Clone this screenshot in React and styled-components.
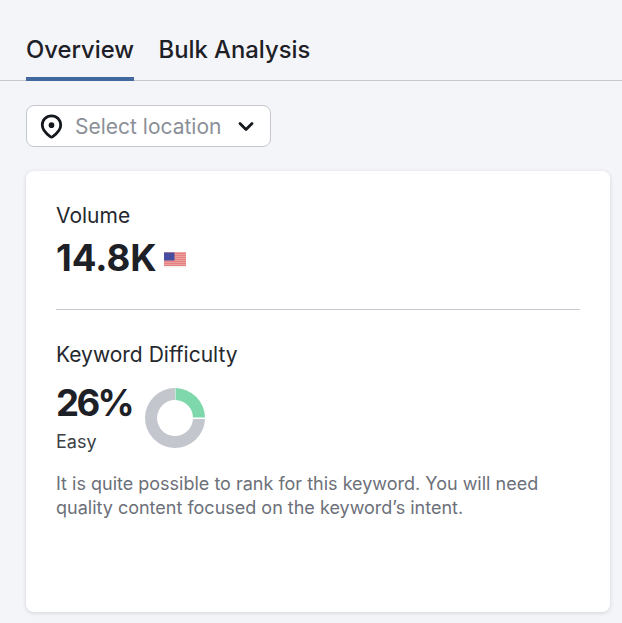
import React from 'react';
import styled, { createGlobalStyle } from 'styled-components';

const GlobalStyle = createGlobalStyle`
	html, body {
		margin: 0;
		padding: 0;
		background: #f4f5f9;
	}
	body {
		font-family: Inter, "Liberation Sans", sans-serif;
		color: #1d2026;
	}
`;

const PinIcon = () => (
	<svg width="27" height="27" viewBox="0 0 24 24" fill="none">
		<path
			d="M12 2.6c-4.6 0-8.2 3.6-8.2 8.1 0 3.3 2.5 6.900 7.100 10.300.66.48 1.540.48 2.200 0 4.600-3.400 7.100-7 7.100-10.300 0-4.500-3.600-8.100-8.200-8.100z"
			stroke="#14171c"
			strokeWidth="2.500"
		/>
		<circle cx="12" cy="10.800" r="2.500" fill="#14171c" />
	</svg>
);

const ChevronIcon = () => (
	<svg width="16" height="16" viewBox="0 0 16 16" fill="none">
		<path d="M2 5.500 8 11.500l6-6" stroke="#14171c" strokeWidth="2.800" strokeLinecap="round" strokeLinejoin="round" />
	</svg>
);

const stripes = [0, 2, 4, 6, 8, 10, 12];

const FlagIcon = () => (
	<svg width="22" height="16" viewBox="0 0 22 16">
		<rect width="22" height="15" y="0.500" fill="#f4f1f3" />
		{stripes.map((y) => (
			<rect key={y} x="0" y={y + 0.500} width="22" height="1.200" fill="#e2504f" />
		))}
		<rect x="0" y="0.500" width="10.500" height="8" fill="#474c9e" />
	</svg>
);

const Donut = () => (
	<svg width="62" height="62" viewBox="0 0 62 62">
		<path d="M61 32A30 30 0 1 1 31 1V13A18 18 0 1 0 49 32z" fill="#c3c6cd" />
		<path d="M31.500 1a30 30 0 0 1 29.500 29.500H49A18 18 0 0 0 31.500 13z" fill="#7ed8ac" />
	</svg>
);

const App = () => {
	return (
		<Page>
			<GlobalStyle />
			<Tabs>
				<Tab $active>Overview</Tab>
				<Tab>Bulk Analysis</Tab>
			</Tabs>
			<Content>
				<LocationSelect>
					<PinIcon />
					<Placeholder>Select location</Placeholder>
					<ChevronIcon />
				</LocationSelect>
				<Card>
					<Section>
						<Label>Volume</Label>
						<VolumeRow>
							<BigValue>14.8K</BigValue>
							<FlagWrap>
								<FlagIcon />
							</FlagWrap>
						</VolumeRow>
					</Section>
					<Divider />
					<Section>
						<Label>Keyword Difficulty</Label>
						<DifficultyRow>
							<div>
								<BigValue $tight>26%</BigValue>
								<Level>Easy</Level>
							</div>
							<DonutWrap>
								<Donut />
							</DonutWrap>
						</DifficultyRow>
						<Description>
							It is quite possible to rank for this keyword. You will need quality content focused on the keyword’s intent.
						</Description>
					</Section>
				</Card>
			</Content>
		</Page>
	);
};

export default App;

const Page = styled.div`
	width: 622px;
	height: 623px;
	overflow: hidden;
	background: #f4f5f9;
`;

const Tabs = styled.div`
	display: flex;
	column-gap: 24.5px;
	height: 81px;
	padding: 0 26px;
	box-sizing: border-box;
	border-bottom: 1px solid #c5c8ce;
`;

const Tab = styled.div`
	height: 81px;
	box-sizing: border-box;
	padding-top: 34px;
	font-size: 23.8px;
	line-height: 32px;
	font-weight: 500;
	border-bottom: ${(props) => (props.$active ? '4px solid #42699f' : 'none')};
`;

const Content = styled.div`
	padding: 24px 12px 0 26px;
`;

const LocationSelect = styled.div`
	display: flex;
	align-items: center;
	width: 245px;
	height: 42px;
	box-sizing: border-box;
	padding: 0 16px 0 11px;
	background: #fff;
	border: 1px solid #c5c8ce;
	border-radius: 8px;
`;

const Placeholder = styled.span`
	flex: 1;
	margin-left: 10px;
	font-size: 21px;
	color: #8b8f97;
`;

const Card = styled.div`
	height: 441px;
	box-sizing: border-box;
	margin-top: 24px;
	padding: 32px 30px 0;
	background: #fff;
	border-radius: 8px;
	box-shadow: 0 1px 4px rgba(60, 65, 80, 0.18);
`;

const Section = styled.div``;

const Label = styled.div`
	font-size: 21px;
	line-height: 26px;
	color: #25282e;
`;

const VolumeRow = styled.div`
	display: flex;
	align-items: center;
	column-gap: 7px;
	margin-top: 7px;
`;

const FlagWrap = styled.span`
	display: flex;
	margin-top: 3px;
`;

const BigValue = styled.div`
	font-size: 36.6px;
	line-height: 44px;
	font-weight: 700;
	letter-spacing: ${(props) => (props.$tight ? '-2.6px' : '0')};
	color: #1d2026;
`;

const Divider = styled.div`
	height: 1px;
	margin: 29px 0 32px;
	background: #c5c8ce;
`;

const DifficultyRow = styled.div`
	display: flex;
	align-items: flex-start;
	column-gap: 12px;
	margin-top: 13px;
`;

const DonutWrap = styled.div`
	display: flex;
	margin-top: 6px;
`;

const Level = styled.div`
	margin-top: 5px;
	font-size: 18px;
	line-height: 24px;
	color: #3b3f46;
`;

const Description = styled.p`
	margin: 18px 0 0;
	font-size: 18px;
	line-height: 24px;
	color: #6c7079;
`;
